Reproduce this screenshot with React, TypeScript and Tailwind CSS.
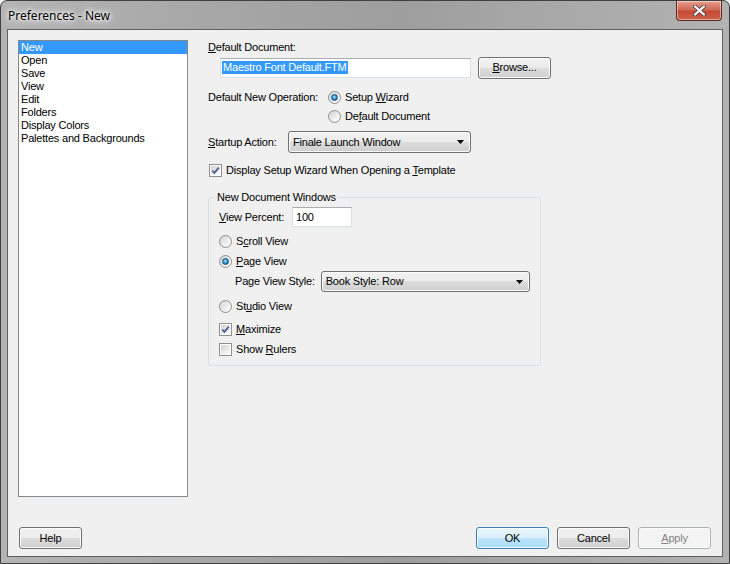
import React from "react";

const font = "font-['Liberation_Sans',Arial,sans-serif] text-[11px] leading-[13px] tracking-[-0.2px] text-black";

function Radio({ checked }: { checked?: boolean }) {
  return (
    <span className="flex h-[13px] w-[13px] shrink-0 items-center justify-center rounded-full border border-[#8e8f8f] bg-[linear-gradient(135deg,#d4d4d4,#f4f4f4_70%,#ffffff)]">
      {checked && (
        <span className="h-[7px] w-[7px] rounded-full border border-[#1a4a74] bg-[radial-gradient(circle_at_45%_40%,#a6e2fb,#2a8fcf_55%,#16507e)]" />
      )}
    </span>
  );
}

function Check({ checked }: { checked?: boolean }) {
  return (
    <span className="flex h-[13px] w-[13px] shrink-0 items-center justify-center border border-[#8e8f8f] bg-white p-[1px]">
      <span className="relative h-full w-full bg-[linear-gradient(135deg,#d2d2d2,#f0f0f0_70%,#ffffff)]">
        {checked && (
          <svg viewBox="0 0 9 9" className="absolute inset-0 h-[9px] w-[9px]">
            <path d="M1.3 4.6 L3.4 6.9 L7.8 1.6" fill="none" stroke="#4a5f97" strokeWidth="1.8" />
          </svg>
        )}
      </span>
    </span>
  );
}

function Combo({ text, w, h }: { text: string; w: string; h: string }) {
  return (
    <div
      className={`${w} ${h} flex items-center justify-between rounded-[3px] border border-[#707070] bg-[linear-gradient(#f2f2f2_0%,#ebebeb_50%,#dddddd_50%,#cfcfcf_100%)] pl-[4px] pr-[6px] shadow-[inset_0_0_0_1px_#fcfcfc]`}
    >
      <span>{text}</span>
      <svg viewBox="0 0 7 4" className="h-[4px] w-[7px]">
        <path d="M0 0 H7 L3.5 4 Z" fill="#000" />
      </svg>
    </div>
  );
}

function Button({
  children,
  variant = "normal",
  w = "w-[73px]",
}: {
  children: React.ReactNode;
  variant?: "normal" | "default" | "disabled";
  w?: string;
}) {
  const styles = {
    normal:
      "border-[#707070] bg-[linear-gradient(#f2f2f2_0%,#ebebeb_50%,#dddddd_50%,#cfcfcf_100%)] text-black",
    default:
      "border-[#3c7fb1] bg-[linear-gradient(#eaf6fd_0%,#d9f0fc_50%,#bee6fd_50%,#a7d9f5_100%)] text-black",
    disabled: "border-[#adb2b5] bg-[#f4f4f4] text-[#838383]",
  }[variant];
  return (
    <div
      className={`${w} flex h-[22px] items-center justify-center rounded-[3px] border shadow-[inset_0_0_0_1px_#fcfcfc] ${styles}`}
    >
      {children}
    </div>
  );
}

function Row({ children, className = "" }: { children: React.ReactNode; className?: string }) {
  return <div className={`flex h-[14px] items-center ${className}`}>{children}</div>;
}

const listItems = ["Open", "Save", "View", "Edit", "Folders", "Display Colors", "Palettes and Backgrounds"];

export default function App() {
  return (
    <div className={`${font} h-[564px] w-[730px] overflow-hidden bg-[#efefef]`}>
      <div className="flex h-[564px] w-[730px] flex-col rounded-t-[7px] border border-[#404040] bg-[linear-gradient(90deg,#b4b4b4_0%,#a6a6a6_30%,#9e9e9e_55%,#a8a8a8_75%,#b2b2b2_100%)]">
        {/* title bar */}
        <div className="flex h-[28px] shrink-0 items-start justify-between">
          <span className="ml-[7px] mt-[7px] font-['Noto_Sans',sans-serif] text-[12px] leading-[16px] tracking-normal text-black [text-shadow:0_0_6px_#ffffff,0_0_10px_#ffffff,0_0_3px_#ffffff]">
            Preferences - New
          </span>
          <div className="mr-[7px] flex h-[20px] w-[46px] items-center justify-center rounded-b-[4px] border border-t-0 border-[#5c2a22] bg-[linear-gradient(#e8a090_0%,#d06a58_45%,#c44a35_55%,#d0604a_100%)] shadow-[inset_0_0_0_1px_rgba(255,255,255,0.45)]">
            <svg viewBox="0 0 14 12" className="h-[11px] w-[13px]">
              <path d="M2 1.5 L12 10.5 M12 1.5 L2 10.5" stroke="#3a2a2a" strokeWidth="4" strokeLinecap="round" />
              <path d="M2 1.5 L12 10.5 M12 1.5 L2 10.5" stroke="#ffffff" strokeWidth="2.4" strokeLinecap="round" />
            </svg>
          </div>
        </div>

        {/* client area */}
        <div className="mx-[6px] flex h-[528px] flex-col border border-[#5f5f5f] bg-[#f0f0f0] px-[10px] pt-[10px]">
          <div className="flex">
            {/* list box */}
            <div className="h-[457px] w-[170px] shrink-0 border border-[#828790] bg-white">
              <div className="flex h-[13px] items-center bg-[#3399ff] pl-[2px] text-white">New</div>
              {listItems.map((t) => (
                <div key={t} className="flex h-[13px] items-center pl-[2px]">
                  {t}
                </div>
              ))}
            </div>

            {/* right panel */}
            <div className="ml-[20px] flex w-[345px] flex-col">
              <Row>
                <span>
                  <u>D</u>efault Document:
                </span>
              </Row>
              <div className="mt-[3px] flex h-[21px] items-center">
                <div className="ml-[12px] flex h-[20px] w-[251px] items-center border border-[#dbdfe6] border-t-[#abadb3] bg-white pl-[1px]">
                  <span className="bg-[#3399ff] px-[1px] text-white">Maestro Font Default.FTM</span>
                </div>
                <div className="ml-[7px]">
                  <Button>
                    <span>
                      <u>B</u>rowse...
                    </span>
                  </Button>
                </div>
              </div>

              <div className="mt-[12px] flex">
                <div className="flex h-[14px] w-[120px] items-center">Default New Operation:</div>
                <div className="flex flex-col gap-[5px]">
                  <Row className="gap-[4px]">
                    <Radio checked />
                    <span>
                      Setup <u>W</u>izard
                    </span>
                  </Row>
                  <Row className="gap-[4px]">
                    <Radio />
                    <span>
                      De<u>f</u>ault Document
                    </span>
                  </Row>
                </div>
              </div>

              <div className="mt-[8px] flex items-center">
                <span className="w-[80px]">
                  <u>S</u>tartup Action:
                </span>
                <Combo text="Finale Launch Window" w="w-[183px]" h="h-[22px]" />
              </div>

              <Row className="mt-[10px] gap-[4px] pl-[1px]">
                <Check checked />
                <span>
                  Display Setup Wizard When Opening a <u>T</u>emplate
                </span>
              </Row>

              {/* group box */}
              <div className="relative mt-[20px] w-[333px] rounded-[3px] border border-[#d5dfe5] px-[10px] pb-[9px] pt-[9px]">
                <span className="absolute left-[6px] top-[-7px] bg-[#f0f0f0] px-[2px]">New Document Windows</span>
                <div className="flex h-[20px] items-center">
                  <span className="w-[73px]">
                    <u>V</u>iew Percent:
                  </span>
                  <div className="flex h-[20px] w-[60px] items-center border border-[#dbdfe6] border-t-[#abadb3] bg-white pl-[3px]">
                    100
                  </div>
                </div>
                <Row className="mt-[7px] gap-[4px]">
                  <Radio />
                  <span>
                    S<u>c</u>roll View
                  </span>
                </Row>
                <Row className="mt-[6px] gap-[4px]">
                  <Radio checked />
                  <span>
                    <u>P</u>age View
                  </span>
                </Row>
                <div className="mt-[3px] flex h-[21px] items-center pl-[16px]">
                  <span className="w-[86px]">
                    Pa<u>g</u>e View Style:
                  </span>
                  <Combo text="Book Style: Row" w="w-[210px]" h="h-[21px]" />
                </div>
                <Row className="mt-[7px] gap-[4px]">
                  <Radio />
                  <span>
                    St<u>u</u>dio View
                  </span>
                </Row>
                <Row className="mt-[9px] gap-[4px]">
                  <Check checked />
                  <span>
                    <u>M</u>aximize
                  </span>
                </Row>
                <Row className="mt-[6px] gap-[4px]">
                  <Check />
                  <span>
                    Show <u>R</u>ulers
                  </span>
                </Row>
              </div>
            </div>
          </div>

          {/* bottom buttons */}
          <div className="mt-[30px] flex items-center justify-between pl-[1px] pr-[1px]">
            <Button w="w-[63px]">Help</Button>
            <div className="flex gap-[8px]">
              <Button variant="default">OK</Button>
              <Button>Cancel</Button>
              <Button variant="disabled">
                <span>
                  <u>A</u>pply
                </span>
              </Button>
            </div>
          </div>
        </div>
      </div>
    </div>
  );
}
